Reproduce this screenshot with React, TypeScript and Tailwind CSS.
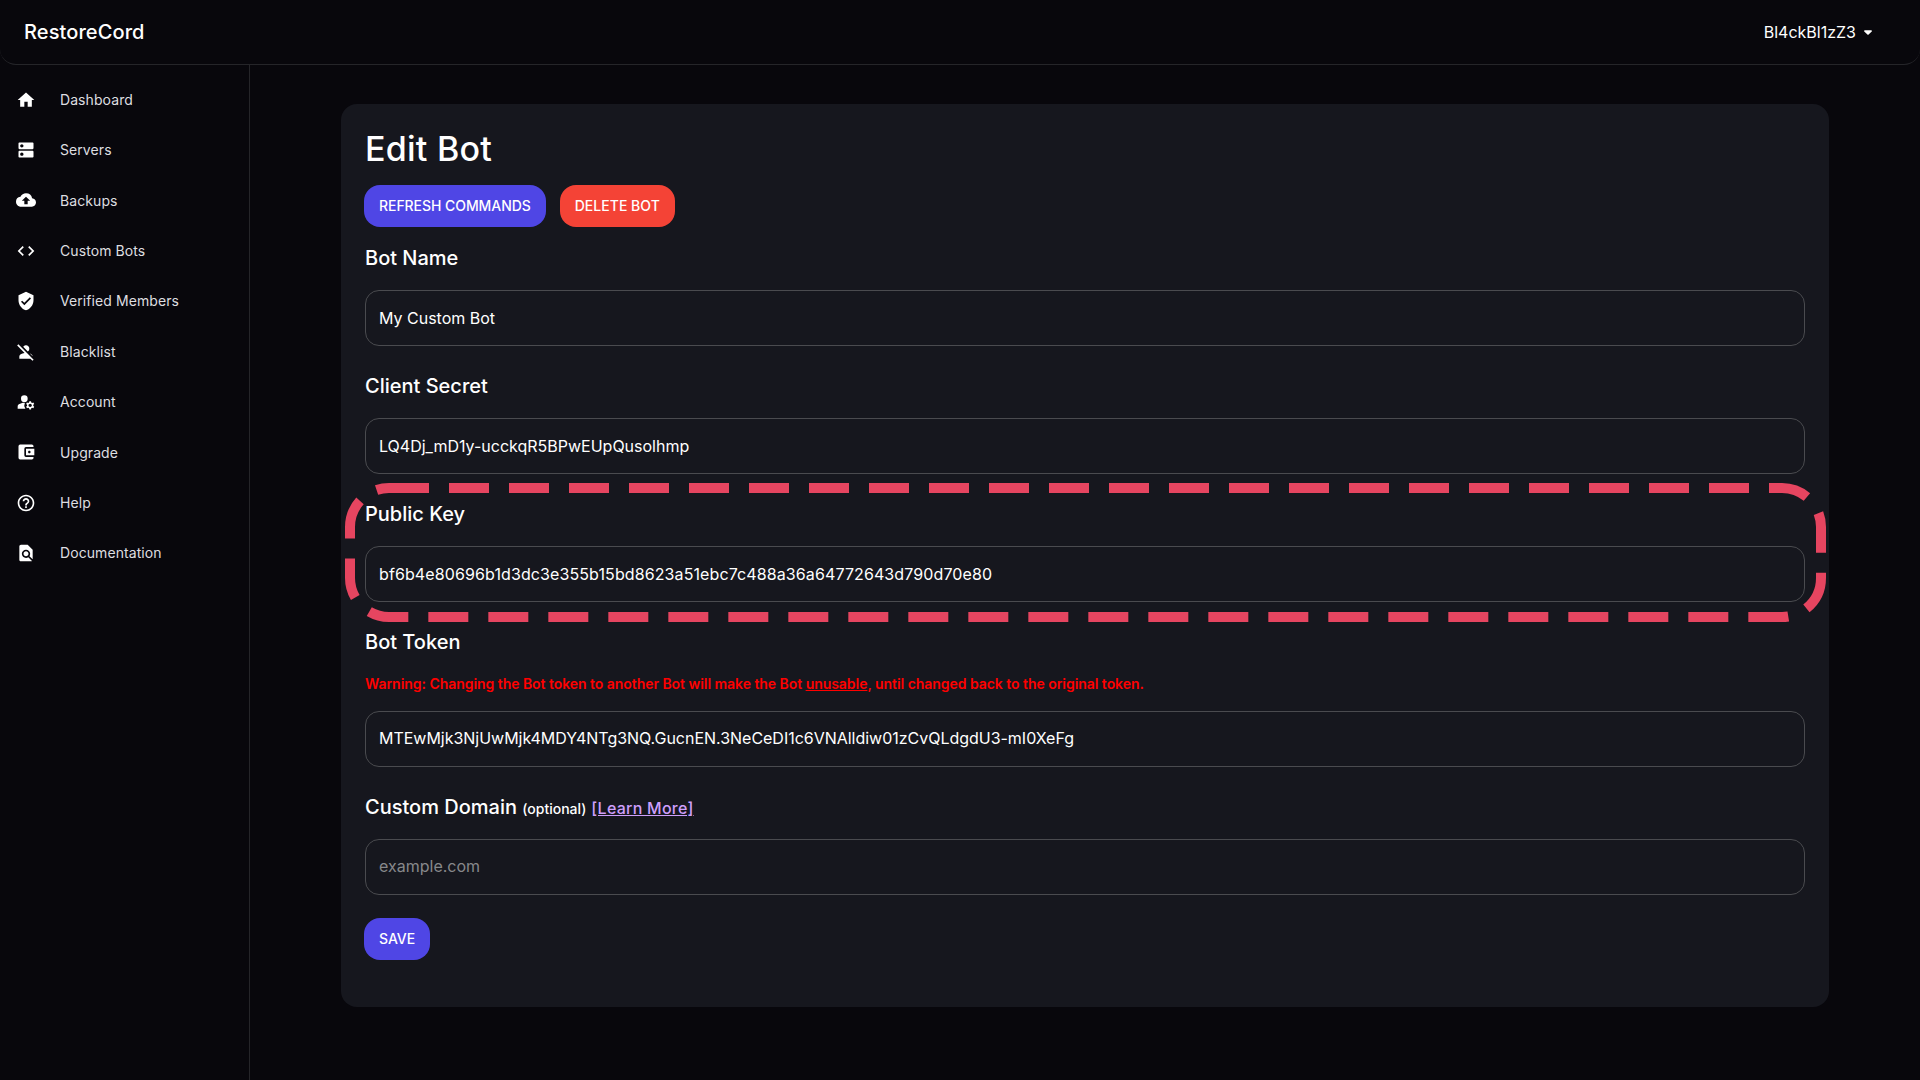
import React from "react";
import {
  MdHome, MdDns, MdBackup, MdCode, MdVerifiedUser, MdPersonOff,
  MdManageAccounts, MdAccountBalanceWallet, MdHelpOutline, MdFindInPage,
} from "react-icons/md";

const nav = [
  { label: "Dashboard", Icon: MdHome },
  { label: "Servers", Icon: MdDns },
  { label: "Backups", Icon: MdBackup },
  { label: "Custom Bots", Icon: MdCode },
  { label: "Verified Members", Icon: MdVerifiedUser },
  { label: "Blacklist", Icon: MdPersonOff },
  { label: "Account", Icon: MdManageAccounts },
  { label: "Upgrade", Icon: MdAccountBalanceWallet },
  { label: "Help", Icon: MdHelpOutline },
  { label: "Documentation", Icon: MdFindInPage },
];

function Field({ value, placeholder, className = "" }: { value?: string; placeholder?: string; className?: string }) {
  return (
    <input
      type="text"
      defaultValue={value}
      placeholder={placeholder}
      className={`block h-14 w-full rounded-[14px] border border-[#4a4b4f] bg-transparent px-[13px] text-base text-white outline-none placeholder:text-[#87888b] ${className}`}
    />
  );
}

function Label({ children }: { children: React.ReactNode }) {
  return <h2 className="text-xl leading-8 font-medium whitespace-pre">{children}</h2>;
}

function Button({ children, className = "bg-[#4f46e5] tracking-[-0.06px]" }: { children: React.ReactNode; className?: string }) {
  return (
    <button className={`h-[42px] rounded-2xl px-[15px] text-sm font-medium whitespace-nowrap text-white ${className}`}>
      {children}
    </button>
  );
}

export default function App() {
  return (
    <div className="flex h-[1080px] w-full flex-col overflow-hidden bg-[#08070c] font-['Inter',sans-serif] text-white">
      <header className="flex h-[65px] shrink-0 items-center justify-between rounded-b-2xl border-b border-[#252529] px-6">
        <div className="text-xl font-medium tracking-[0.1px]">RestoreCord</div>
        <div className="mr-6 flex items-center gap-2 text-base">
          Bl4ckBl1zZ3
          <svg width="8" height="5" viewBox="0 0 8 5" fill="white"><path d="M0 1.2Q0 .3 1 .3H7Q8 .3 8 1.2L4.6 4.6Q4 5 3.4 4.6Z" /></svg>
        </div>
      </header>
      <div className="flex min-h-0 flex-1">
        <nav className="flex w-[250px] shrink-0 flex-col border-r border-[#252529] pt-[10px]">
          {nav.map(({ label, Icon }) => (
            <a key={label} className="flex h-[50.4px] items-center pl-4">
              <Icon className="-mt-px size-5 text-white" />
              <span className="mt-[-0.6px] ml-6 text-sm tracking-[0.08px] text-[#dedee0]">{label}</span>
            </a>
          ))}
        </nav>
        <main className="flex-1 px-[91px] pt-[39px]">
          <section className="relative h-[903px] rounded-2xl bg-[#16171e] px-6 pt-6">
            <h1 className="text-[34px] leading-[42px] font-medium tracking-[0.25px]">Edit Bot</h1>
            <div className="-ml-px mt-[15px] flex gap-[14px]">
              <Button>REFRESH COMMANDS</Button>
              <Button className="bg-[#f44336] tracking-[0.02px]">DELETE BOT</Button>
            </div>
            <div className="mt-[15px]"><Label>Bot Name</Label></div>
            <div className="mt-4"><Field value="My Custom Bot" /></div>
            <div className="mt-6"><Label>Client Secret</Label></div>
            <div className="mt-4"><Field value="LQ4Dj_mD1y-ucckqR5BPwEUpQusolhmp" /></div>
            <div className="mt-6"><Label>Public Key</Label></div>
            <div className="mt-4"><Field className="tracking-[0.105px]" value="bf6b4e80696b1d3dc3e355b15bd8623a51ebc7c488a36a64772643d790d70e80" /></div>
            <div className="mt-6"><Label>Bot Token</Label></div>
            <p className="mt-[15px] text-sm leading-[22px] font-semibold tracking-[-0.045px] text-[#ff0000]">
              Warning: Changing the Bot token to another Bot will make the Bot <u>unusable</u>, until changed back to the original token.
            </p>
            <div className="mt-4"><Field className="pb-0.5 tracking-[-0.02px]" value="MTEwMjk3NjUwMjk4MDY4NTg3NQ.GucnEN.3NeCeDI1c6VNAlldiw01zCvQLdgdU3-mI0XeFg" /></div>
            <div className="mt-6">
              <Label>
                Custom Domain <span className="text-sm">(optional)</span>
                <a className="ml-[5px] text-base tracking-[0.25px] text-[#ce9ffc] underline">[Learn More]</a>
              </Label>
            </div>
            <div className="mt-4"><Field className="pb-0.5" placeholder="example.com" /></div>
            <div className="-ml-px mt-[23px]"><Button>SAVE</Button></div>
            <svg className="pointer-events-none absolute top-[379px] left-1" width="1481" height="139" viewBox="345 483 1481 139" fill="none">
              <rect x="350" y="488" width="1471" height="129" rx="39" stroke="#e64560" strokeWidth="10" strokeDasharray="40 20" />
            </svg>
          </section>
        </main>
      </div>
    </div>
  );
}
